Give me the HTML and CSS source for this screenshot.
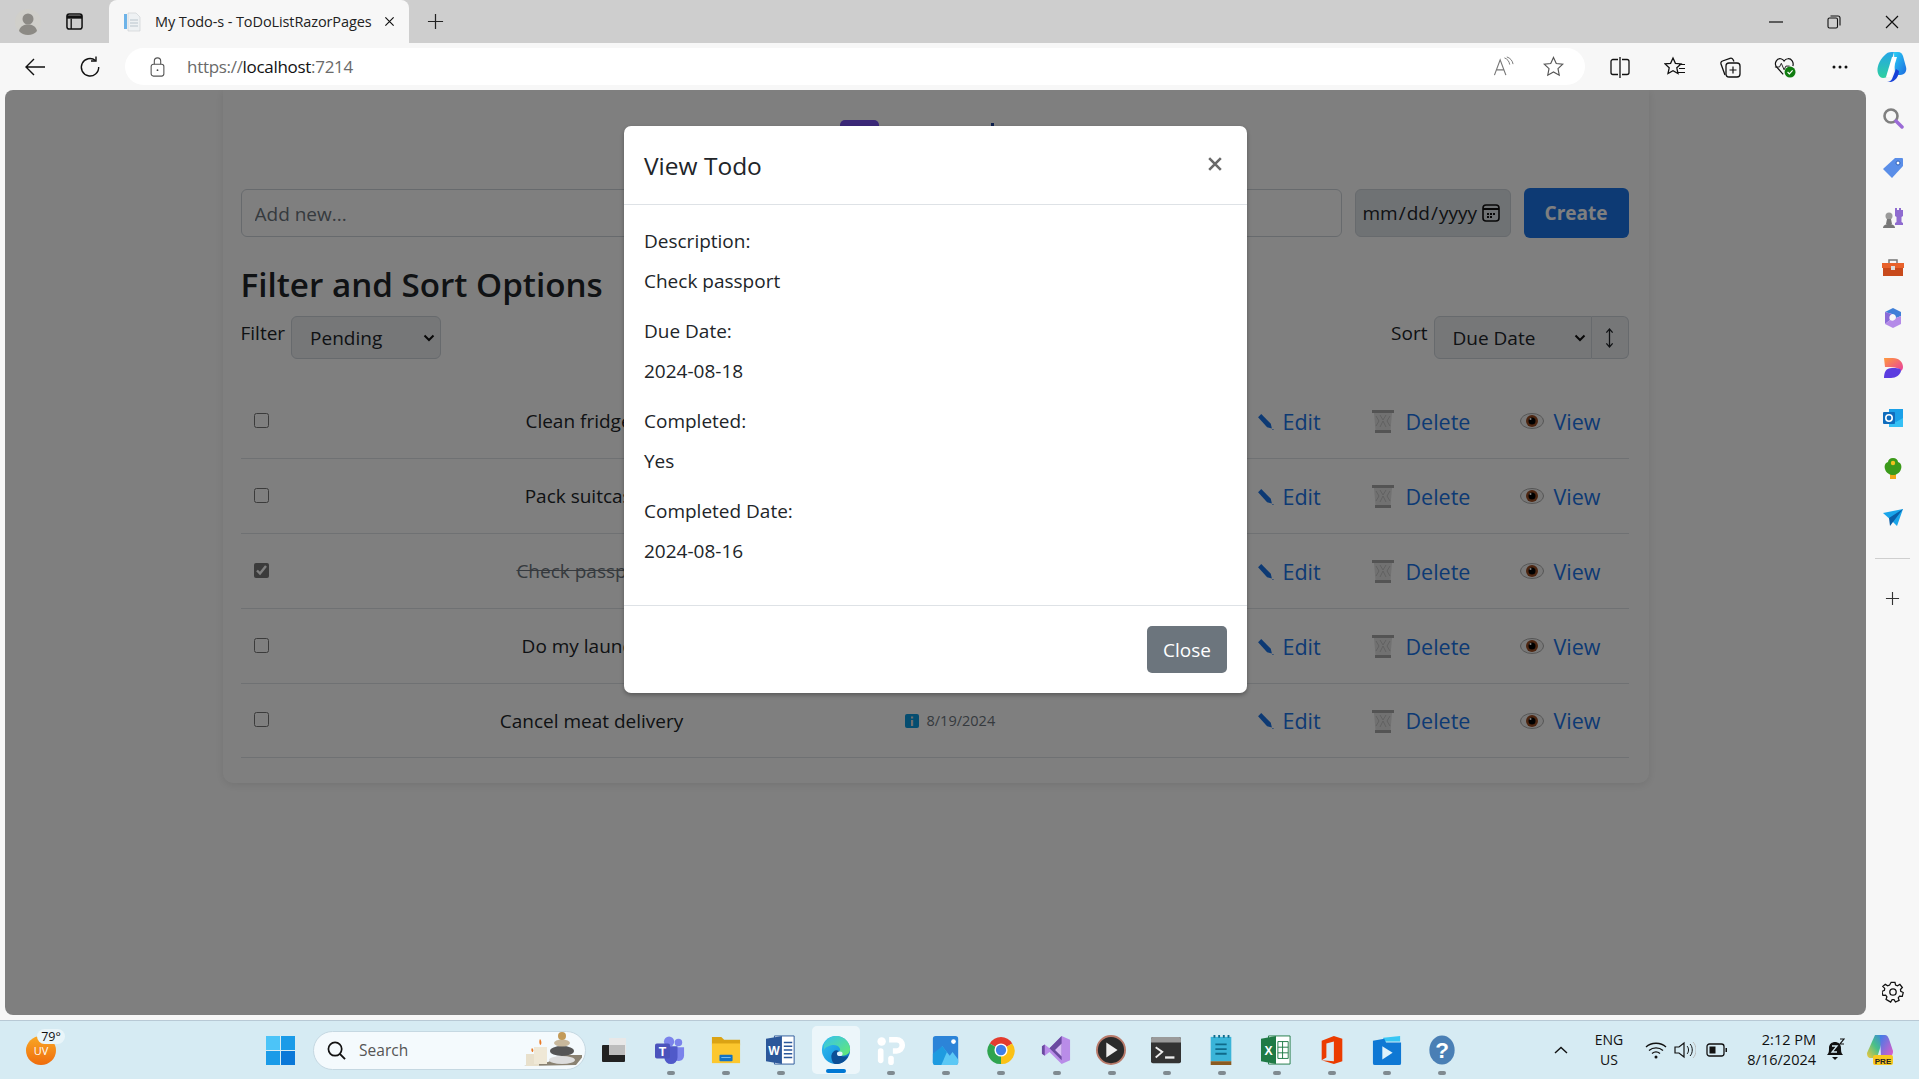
FILE: index.html
```html
<!DOCTYPE html>
<html>
<head>
	<meta charset="utf-8" />
	<title>My Todo-s - ToDoListRazorPages</title>
	<link rel="stylesheet" href="styles.css">
</head>

<body>

<!-- icons used in every todo row -->
<svg class="icon-defs">
	<symbol id="sym-edit" viewBox="0 0 16 16"><path d="M1 4l3-3 9 9 1 4.500-4.500-1z" fill="#1a74e8"/><path d="M15.500 15.500h-1" stroke="#1a74e8"/></symbol>
	<symbol id="sym-trash" viewBox="0 0 22 24"><path d="M0 1h22v3H0z" fill="#a8a8a8"/><path d="M2 4h18l-1.500 18h-15z" fill="#e2e2e2"/><path d="M4 7l3 5-3 5M8 6l3 5 3-5M18 7l-3 5 3 5M8 18l3-6 3 6" fill="none" stroke="#c4c4c4"/><path d="M3 21h16v3H3z" fill="#a8a8a8"/></symbol>
	<symbol id="sym-eye" viewBox="0 0 24 16"><ellipse cx="12" cy="8" rx="11.500" ry="7.500" fill="#f2f2f2" stroke="#aaa"/><circle cx="12" cy="8" r="6" fill="#9b4c22"/><circle cx="12" cy="8" r="3.500" fill="#000"/><circle cx="10.500" cy="6" r="1" fill="#fff"/></symbol>
</svg>

<!-- browser tabs -->
<div class="tabstrip">
	<svg class="profile" viewBox="0 0 26 26"><circle cx="13" cy="13" r="13" fill="#d0cfca"/><circle cx="13" cy="10" r="5.500" fill="#8c8a85"/><path d="M4 22c1-5 5-6.500 9-6.500s8 1.500 9 6.500c-2 2.500-5.500 4-9 4s-7-1.500-9-4z" fill="#8c8a85"/></svg>
	<svg class="tab-actions" viewBox="0 0 18 18"><rect x="1" y="1" width="16" height="16" rx="2.500" fill="none" stroke="#111" stroke-width="1.600"/><path d="M1 2.500h16v3.500H1z" fill="#111"/><path d="M5.500 6v11" stroke="#111" stroke-width="1.400"/></svg>
	<div class="tab">
		<svg class="favicon" viewBox="0 0 20 20"><rect x="1" y="2" width="3" height="15" fill="#6db3e8"/><path d="M5 1h8l4 4v14H5z" fill="#eef1f3" stroke="#c9ced2" stroke-width=".6"/><path d="M7 8h8M7 11h8M7 14h8" stroke="#b9c4cc"/></svg>
		<span class="tab-title">My Todo-s - ToDoListRazorPages</span>
		<svg class="tab-close" viewBox="0 0 12 12"><path d="M1.500 1.500l9 9M10.500 1.500l-9 9" stroke="#111" stroke-width="1.300"/></svg>
	</div>
	<svg class="new-tab" viewBox="0 0 18 18"><path d="M9 1v16M1 9h16" stroke="#222" stroke-width="1.300"/></svg>
	<div class="window-btns">
		<svg viewBox="0 0 14 14"><path d="M0 7h14" stroke="#111" stroke-width="1.200"/></svg>
		<svg viewBox="0 0 14 14"><rect x="1" y="3" width="9.500" height="10" rx="1.500" fill="none" stroke="#111" stroke-width="1.100"/><path d="M3.500 1h7.500a2 2 0 0 1 2 2v7.500" fill="none" stroke="#111" stroke-width="1.100"/></svg>
		<svg viewBox="0 0 14 14"><path d="M1 1l12 12M13 1L1 13" stroke="#111" stroke-width="1.200"/></svg>
	</div>
</div>

<!-- address bar row -->
<div class="toolbar">
	<svg class="tool tool-back" viewBox="0 0 22 22"><path d="M21 11H2M10 3l-8 8 8 8" fill="none" stroke="#111" stroke-width="1.400"/></svg>
	<svg class="tool tool-reload" viewBox="0 0 22 22"><path d="M16.500 4.500A8.700 8.700 0 1 0 19.700 11" fill="none" stroke="#111" stroke-width="1.400"/><path d="M17 .5v4.500h-5" fill="none" stroke="#111" stroke-width="1.400"/></svg>
	<div class="addressbar">
		<svg class="lock" viewBox="0 0 16 22"><rect x="1" y="8" width="14" height="13" rx="2.500" fill="none" stroke="#555" stroke-width="1.200"/><path d="M4.500 8V4.500a3.500 3.500 0 0 1 7 0V8" fill="none" stroke="#555" stroke-width="1.200"/><circle cx="8" cy="14.500" r="1" fill="#444"/></svg>
		<span class="url"><span class="url-dim">https://</span>localhost<span class="url-dim">:7214</span></span>
		<svg class="addr-icon addr-read" viewBox="0 0 22 22"><path d="M1.500 20L7.500 4l6 16M3.800 14.500h7.500" fill="none" stroke="#777" stroke-width="1.200"/><path d="M12 2c3 1 5 3.500 5.500 7M14.500 1c3.500 1 6 4 6.500 7.500" fill="none" stroke="#777"/></svg>
		<svg class="addr-icon addr-star" viewBox="0 0 22 22"><path d="M11 1.500l2.900 6.300 6.800.8-5 4.700 1.300 6.800-6-3.400-6 3.400 1.300-6.800-5-4.700 6.800-.8z" fill="none" stroke="#555" stroke-width="1.200"/></svg>
	</div>
	<svg class="tool tool-split" viewBox="0 0 22 22"><path d="M9 3.500H4a2 2 0 0 0-2 2v11a2 2 0 0 0 2 2h5M13 3.500h5a2 2 0 0 1 2 2v11a2 2 0 0 1-2 2h-5M11 1v21" fill="none" stroke="#111" stroke-width="1.300"/></svg>
	<svg class="tool tool-favs" viewBox="0 0 22 22"><path d="M9 2l2.400 5.300 5.600.6-4.200 3.900 1.200 5.700L9 14.700l-5 2.800 1.200-5.700L1 7.900l5.600-.6z" fill="none" stroke="#111" stroke-width="1.300"/><path d="M15 8.500h6M15 12.500h6M14 16.500h7" stroke="#111" stroke-width="1.200"/></svg>
	<svg class="tool tool-coll" viewBox="0 0 22 22"><rect x="7" y="7" width="14" height="14" rx="3" fill="none" stroke="#111" stroke-width="1.300"/><path d="M14 10.500v7M10.500 14h7" stroke="#111" stroke-width="1.200"/><path d="M6 19L2 8a2.500 2.500 0 0 1 1.500-3L11 2.300a2.500 2.500 0 0 1 3 1.200l1 2" fill="none" stroke="#111" stroke-width="1.300"/></svg>
	<svg class="tool tool-health" viewBox="0 0 24 24"><path d="M10 20L2.500 11.500C0 8 3 2 7.500 3c1.500.3 3 1.500 3.500 2.500C12 4 13.500 3 15 3c4-.5 7 4 5.500 8" fill="none" stroke="#111" stroke-width="1.300"/><path d="M1 12h5l2-4 3 7 2-4h4" fill="none" stroke="#111"/><circle cx="17.500" cy="17.500" r="6" fill="#107c10"/><path d="M14.800 17.500l2 2 3.500-3.800" fill="none" stroke="#fff" stroke-width="1.300"/></svg>
	<svg class="tool tool-dots" viewBox="0 0 16 4"><circle cx="2" cy="2" r="1.500" fill="#111"/><circle cx="8" cy="2" r="1.500" fill="#111"/><circle cx="14" cy="2" r="1.500" fill="#111"/></svg>
	<svg class="tool tool-copilot" viewBox="0 0 30 32"><defs><linearGradient id="cpa" x1="0" y1="0" x2="0" y2="1"><stop offset="0" stop-color="#25a5e8"/><stop offset="1" stop-color="#2fd0a0"/></linearGradient><linearGradient id="cpb" x1="0" y1="0" x2="1" y2="1"><stop offset="0" stop-color="#2ad0f5"/><stop offset="1" stop-color="#1c6be0"/></linearGradient></defs><path d="M9 3c2-2 5-2 8-2l-6 22c-1 3-2 4-5 4C3 27 1 24 .5 20 0 14 4 7 9 3z" fill="url(#cpa)"/><path d="M17 1h4c3 0 4 2 5 4l3 11c1 4-1 8-6 8h-5z" fill="url(#cpb)"/><path d="M15 6h5l-6 20h-5z" fill="#fff"/><path d="M10 31c2 0 4-1 5-3l4-10 3 2c0 5-4 11-9 11z" fill="#1741d8"/></svg>
</div>

<div class="workspace">
	<div class="page">
		<div class="card">
			<div class="brand">
				<span class="brand-logo"></span>
				<span class="brand-dot"></span>
			</div>

			<form class="add-form">
				<input type="text" class="add-text" placeholder="Add new..." />
				<input type="date" class="add-date" />
				<button type="button" class="btn-create">Create</button>
			</form>

			<h2 class="options-title">Filter and Sort Options</h2>
			<div class="options">
				<div class="option-group">
					<label class="option-label">Filter</label>
					<select class="option-select select-filter"><option>Pending</option></select>
				</div>
				<div class="option-group">
					<label class="option-label">Sort</label>
					<select class="option-select select-sort"><option>Due Date</option></select>
					<button type="button" class="btn-order"><svg viewBox="0 0 10 22"><path d="M5 1v20M1.500 5L5 1l3.500 4M1.500 17L5 21l3.500-4" fill="none" stroke="#212529" stroke-width="1.400"/></svg></button>
				</div>
			</div>

			<ul class="todos">
				<li class="todo">
					<input type="checkbox" class="todo-check" />
					<span class="todo-name name-clean">Clean fridge</span>
					<span class="todo-date"></span>
					<div class="todo-links">
						<a href="#"><svg class="ico-edit"><use href="#sym-edit"/></svg>Edit</a>
						<a href="#"><svg class="ico-trash"><use href="#sym-trash"/></svg>Delete</a>
						<a href="#"><svg class="ico-eye"><use href="#sym-eye"/></svg>View</a>
					</div>
				</li>
				<li class="todo">
					<input type="checkbox" class="todo-check" />
					<span class="todo-name name-pack">Pack suitcase</span>
					<span class="todo-date"></span>
					<div class="todo-links">
						<a href="#"><svg class="ico-edit"><use href="#sym-edit"/></svg>Edit</a>
						<a href="#"><svg class="ico-trash"><use href="#sym-trash"/></svg>Delete</a>
						<a href="#"><svg class="ico-eye"><use href="#sym-eye"/></svg>View</a>
					</div>
				</li>
				<li class="todo">
					<input type="checkbox" class="todo-check" checked />
					<span class="todo-name todo-done name-check">Check passport</span>
					<span class="todo-date"></span>
					<div class="todo-links">
						<a href="#"><svg class="ico-edit"><use href="#sym-edit"/></svg>Edit</a>
						<a href="#"><svg class="ico-trash"><use href="#sym-trash"/></svg>Delete</a>
						<a href="#"><svg class="ico-eye"><use href="#sym-eye"/></svg>View</a>
					</div>
				</li>
				<li class="todo">
					<input type="checkbox" class="todo-check" />
					<span class="todo-name name-laundry">Do my laundry</span>
					<span class="todo-date"></span>
					<div class="todo-links">
						<a href="#"><svg class="ico-edit"><use href="#sym-edit"/></svg>Edit</a>
						<a href="#"><svg class="ico-trash"><use href="#sym-trash"/></svg>Delete</a>
						<a href="#"><svg class="ico-eye"><use href="#sym-eye"/></svg>View</a>
					</div>
				</li>
				<li class="todo">
					<input type="checkbox" class="todo-check" />
					<span class="todo-name">Cancel meat delivery</span>
					<span class="todo-date"><svg class="ico-info" viewBox="0 0 14 14"><rect width="14" height="14" rx="2" fill="#0a9ae0"/><path d="M6 6h2.200v6H6zM6 2.500h2.200v2H6z" fill="#ddd"/></svg>8/19/2024</span>
					<div class="todo-links">
						<a href="#"><svg class="ico-edit"><use href="#sym-edit"/></svg>Edit</a>
						<a href="#"><svg class="ico-trash"><use href="#sym-trash"/></svg>Delete</a>
						<a href="#"><svg class="ico-eye"><use href="#sym-eye"/></svg>View</a>
					</div>
				</li>
			</ul>
		</div>

		<!-- view dialog -->
		<div class="backdrop">
			<div class="modal">
				<div class="modal-header">
					<h5 class="modal-title">View Todo</h5>
					<svg class="modal-x" viewBox="0 0 12 12"><path d="M1 1l10 10M11 1L1 11" stroke="#6a6a6a" stroke-width="2.200"/></svg>
				</div>
				<div class="modal-body">
					<label>Description:</label>
					<p>Check passport</p>
					<label>Due Date:</label>
					<p>2024-08-18</p>
					<label>Completed:</label>
					<p>Yes</p>
					<label>Completed Date:</label>
					<p>2024-08-16</p>
				</div>
				<div class="modal-footer">
					<button type="button" class="btn-close">Close</button>
				</div>
			</div>
		</div>
	</div>

	<!-- edge sidebar -->
	<div class="sidebar">
		<div class="side-item"><svg viewBox="0 0 22 22"><circle cx="9" cy="9" r="6.500" fill="none" stroke="#808080" stroke-width="2.600"/><path d="M14 14l6 6" stroke="#9b6bd6" stroke-width="3.500" stroke-linecap="round"/></svg></div>
		<div class="side-item"><svg viewBox="0 0 22 22"><path d="M13 1h7a1 1 0 0 1 1 1v7L10 21 1 12z" fill="#5a8ee8"/><circle cx="16" cy="6" r="2" fill="#fff" stroke="#2f5fb8"/></svg></div>
		<div class="side-item"><svg viewBox="0 0 22 22"><path d="M13 1h2v2h2V1h2v2h2V1v8l-1.500 1v5l1.500 1v2h-8v-2l1.500-1v-5L13 9z" fill="#8f6bd0"/><circle cx="7" cy="9" r="3.500" fill="#9a9a9a"/><path d="M5 12h4l1 5H4zM1 21c0-2 2-4 6-4s6 2 6 4z" fill="#777"/></svg></div>
		<div class="side-item"><svg viewBox="0 0 22 22"><path d="M7 6V3h8v3" fill="none" stroke="#777" stroke-width="1.500"/><path d="M0 6h22v5H0z" fill="#e8622c"/><path d="M1 11h20v8H1z" fill="#c84a1c"/><rect x="9" y="9" width="4" height="4" fill="#ddd"/></svg></div>
		<div class="side-item"><svg viewBox="0 0 22 22"><path d="M11 1l8 4v4l-5 2a4 4 0 0 0-4-4L3 5z" fill="#3f7fd8"/><path d="M3 5l7 2a4 4 0 0 0-2 6L3 17z" fill="#8a6ad8"/><path d="M19 9v8l-8 4-8-4 5-4a4 4 0 0 0 6-2z" fill="#b48ae8"/></svg></div>
		<div class="side-item"><svg viewBox="0 0 22 22"><defs><linearGradient id="dsa" x1="0" y1="0" x2="1" y2="1"><stop offset="0" stop-color="#ff9a3c"/><stop offset="1" stop-color="#e83ea0"/></linearGradient></defs><path d="M2 1h9c6 0 10 4 10 9 0 2-1 3-2 4-2-4-9-4-16-4z" fill="url(#dsa)"/><path d="M2 21c0-6 2-10 8-10 5 0 9 0 9 3-1 4-5 7-10 7z" fill="#5b3ce0"/></svg></div>
		<div class="side-item"><svg viewBox="0 0 22 22"><path d="M7 2h14v18H7z" fill="#1aa0e8"/><path d="M7 11l7 4 7-4v9H7z" fill="#35c0f5"/><rect x="1" y="5" width="12" height="12" rx="1" fill="#0f6cbd"/><circle cx="7" cy="11" r="3.200" fill="none" stroke="#fff" stroke-width="1.600"/></svg></div>
		<div class="side-item"><svg viewBox="0 0 22 22"><path d="M8 17h6v5H8z" fill="#f0a818"/><path d="M11 1c3 0 5 2 5 4 3 1 4 4 3 7-1 4-5 6-8 6s-7-2-8-6c-1-3 0-6 3-7 0-2 2-4 5-4z" fill="#3c9a1a"/><circle cx="11" cy="6" r="2.200" fill="#f0c020"/></svg></div>
		<div class="side-item"><svg viewBox="0 0 22 22"><path d="M1 6l20-4-6 17-5-5z" fill="#1aa5ea"/><path d="M21 2L7 11l1 8 3-4z" fill="#0a5fa8"/></svg></div>
		<div class="side-sep"></div>
		<div class="side-item side-plus"><svg viewBox="0 0 16 16"><path d="M8 1v14M1 8h14" stroke="#333" stroke-width="1.200"/></svg></div>
		<div class="side-item side-gear"><svg viewBox="0 0 22 22"><path d="M9 1h4l.6 2.800 2 .9 2.500-1.500 2.600 3.300-2 2 .3 2 2.600 1.200-1 4-2.900-.2-1.300 1.700.9 2.700-3.800 1.700-1.500-2.400h-2l-1.500 2.400L3.700 18.800l.9-2.700-1.300-1.700-2.900.2-1-4 2.600-1.200.3-2-2-2L2.900 3.200l2.500 1.500 2-.9z" transform="translate(.5 .3) scale(.96)" fill="none" stroke="#111" stroke-width="1.300"/><circle cx="11" cy="11" r="3.200" fill="none" stroke="#111" stroke-width="1.300"/></svg></div>
	</div>
</div>

<!-- windows taskbar -->
<div class="taskbar">
	<div class="weather">
		<span class="weather-uv">UV</span>
		<span class="weather-temp">79°</span>
	</div>
	<div class="task-slot task-start"><svg viewBox="0 0 29 29"><path d="M0 0h14v14H0zM15 0h14v14H15zM0 15h14v14H0zM15 15h14v14H15z" fill="#1a9be8"/><path d="M0 0h14v14H0z" fill="#4cc4f8"/><path d="M15 15h14v14H15z" fill="#0a78d8"/></svg></div>
	<div class="search">
		<svg class="search-ico" viewBox="0 0 20 20"><circle cx="8.500" cy="8.500" r="7" fill="none" stroke="#111" stroke-width="1.800"/><path d="M13.500 13.500l5.500 5.500" stroke="#111" stroke-width="2"/></svg>
		<span class="search-text">Search</span>
		<svg class="search-art" viewBox="0 0 58 36"><path d="M0 34l52-1 8-10-20 0-16 7z" fill="#8a8272"/><rect x="2" y="22" width="13" height="12" fill="#e8e0cc"/><rect x="10" y="15" width="13" height="17" fill="#efe8d6"/><path d="M8 16c-1.500 2 0 4 .5 4s2-2-.5-4zM16 7c-1.500 3 0 6 .5 6s2-3-.5-6z" fill="#e87a28"/><ellipse cx="38" cy="28" rx="13" ry="4" fill="#ddd"/><ellipse cx="38" cy="19" rx="12" ry="5" fill="#555"/><ellipse cx="38" cy="11" rx="8" ry="3.500" fill="#c8b89c"/><circle cx="38" cy="4" r="4" fill="#c29a58"/></svg>
	</div>
	<div class="task-slot task-first"><svg viewBox="0 0 24 24"><rect x="0" y="7" width="23" height="17" rx="1" fill="#222"/><rect x="7" y="0" width="17" height="17" fill="#e8e8e8"/><rect x="7" y="7" width="16" height="10" fill="#bdbdbd"/></svg></div>
	<div class="task-slot task-run"><svg viewBox="0 0 32 32"><circle cx="25" cy="8" r="4" fill="#7b83eb"/><path d="M18 13h13v9a6 6 0 0 1-11 3z" fill="#7b83eb"/><circle cx="15" cy="7" r="5.500" fill="#7b83eb"/><path d="M9 12h15v12a7 7 0 0 1-14 0z" fill="#5059c9"/><rect x="0" y="9" width="16" height="16" rx="2" fill="#4b53bc"/><text x="8" y="22" class="ico-letter">T</text></svg></div>
	<div class="task-slot task-run"><svg viewBox="0 0 32 32"><path d="M1 2h10l3 3h17v6H1z" fill="#dba314"/><path d="M1 9h30v21H1z" fill="#fcc72e"/><rect x="9" y="21" width="14" height="7" rx="1" fill="#1272c4"/><path d="M11 24h10" stroke="#7cc0f0"/></svg></div>
	<div class="task-slot task-run"><svg viewBox="0 0 32 32"><path d="M9 1h21v30H9z" fill="#fff" stroke="#2b579a"/><path d="M19 8h9M19 12h9M19 16h9M19 20h9M19 24h9" stroke="#2b579a" stroke-width="1.500"/><path d="M0 4l17-3v30L0 28z" fill="#2b579a"/><text x="8.500" y="21" class="ico-letter">W</text></svg></div>
	<div class="task-slot task-edge">
		<svg viewBox="0 0 32 32"><defs><linearGradient id="ega" x1="0" y1="0" x2="1" y2="1"><stop offset="0" stop-color="#35c1f1"/><stop offset=".6" stop-color="#1b9de2"/><stop offset="1" stop-color="#0c59a4"/></linearGradient><linearGradient id="egb" x1="0" y1="0" x2="1" y2="1"><stop offset="0" stop-color="#35c1f1"/><stop offset="1" stop-color="#66eb6e"/></linearGradient></defs><circle cx="16" cy="16" r="15" fill="url(#ega)"/><path d="M3 10C6 3 12 1 16 1c8 0 15 6 15 14 0 5-4 7-8 7-3 0-5-1-5-3 2-1 3-3 2-5-2-4-8-4-12-2-3 1-5 3-5 5z" fill="url(#egb)"/><path d="M11 22c1-5 5-7 8-5-1 3 2 6 6 6 2 0 3 0 4-1-2 5-7 9-13 9-3 0-5-4-5-9z" fill="#0c4f96"/><ellipse cx="20" cy="20" rx="3" ry="2.500" fill="#dff2fb"/></svg>
	</div>
	<div class="task-slot task-run"><svg viewBox="0 0 32 32"><circle cx="6" cy="7" r="4.500" fill="#fff"/><path d="M14 2h8a9 9 0 0 1 0 18h-4v-6h4a3 3 0 0 0 0-6h-8z" fill="#fff"/><rect x="2" y="14" width="6" height="16" rx="3" fill="#fff"/><rect x="13" y="22" width="6" height="10" rx="3" fill="#fff"/></svg></div>
	<div class="task-slot task-run"><svg viewBox="0 0 32 32"><rect x="2" y="1" width="27" height="31" rx="3" fill="#2c84d8"/><path d="M2 26l10-14 8 10 3-4 6 8v3a3 3 0 0 1-3 3H5a3 3 0 0 1-3-3z" fill="#5cc8f5"/><path d="M2 20l10-8 5 6-6 14H5a3 3 0 0 1-3-3z" fill="#1e9be0"/><circle cx="24" cy="7" r="2.500" fill="#fff"/></svg></div>
	<div class="task-slot task-run"><svg viewBox="0 0 32 32"><path d="M16 16L4 9a14 14 0 0 1 24 0z" fill="#e33b2e"/><path d="M16 16l12-7a14 14 0 0 1-12 22z" fill="#fbc116"/><path d="M16 16v15A14 14 0 0 1 4 9z" fill="#2fa44f"/><circle cx="16" cy="16" r="7" fill="#fff"/><circle cx="16" cy="16" r="5.500" fill="#3f7fe8"/></svg></div>
	<div class="task-slot task-run"><svg viewBox="0 0 32 32"><path d="M22 1l9 4v22l-9 4-13-13-5 4-3-2V12l3-2 5 4z" fill="#b98ce8"/><path d="M22 1L9 14l-5-4-3 2v8l3 2V10l5 4 13 13z" fill="#6a4aa0"/><path d="M22 9v14l-7-7z" fill="#d8bdf5"/></svg></div>
	<div class="task-slot task-run"><svg viewBox="0 0 32 32"><circle cx="16" cy="16" r="15" fill="#2a2a2a" stroke="#b97a6a" stroke-width="2"/><path d="M11 8l12 8-12 8z" fill="#eee"/></svg></div>
	<div class="task-slot task-run"><svg viewBox="0 0 32 28"><rect y="0" width="32" height="28" rx="2" fill="#333"/><path d="M0 2a2 2 0 0 1 2-2h28a2 2 0 0 1 2 2v4H0z" fill="#9a9a9a"/><path d="M5 11l7 5-7 6" fill="none" stroke="#eee" stroke-width="2"/><path d="M15 22h10" stroke="#eee" stroke-width="2.500"/></svg></div>
	<div class="task-slot task-run"><svg viewBox="0 0 24 32"><path d="M1 2h22v26H1z" fill="#3ab4d8"/><path d="M1 28h22v4H1z" fill="#8a5a20"/><path d="M6 10h12M6 15h12M6 20h12" stroke="#0f6a8a" stroke-width="2"/><path d="M5 0v3M10 0v3M15 0v3M20 0v3" stroke="#0f6a8a" stroke-width="2"/></svg></div>
	<div class="task-slot task-run"><svg viewBox="0 0 32 32"><path d="M8 1h23v30H8z" fill="#fff" stroke="#1f7a45"/><path d="M18 7h11v18H18z" fill="none" stroke="#1f7a45"/><path d="M18 13h11M18 19h11M23 7v18" stroke="#1f7a45"/><path d="M0 4l16-3v30L0 28z" fill="#1f7a45"/><text x="8" y="21" class="ico-letter">X</text></svg></div>
	<div class="task-slot task-run"><svg viewBox="0 0 26 32"><path d="M2 6L15 1l9 3v24l-9 3-13-4 13 1V7L7 9v15l-5 3z" fill="#eb3c00"/></svg></div>
	<div class="task-slot task-run"><svg viewBox="0 0 32 32"><path d="M12 3l18-2v6H12z" fill="#37c6f4"/><path d="M1 6l12-2 2 4h16v22a2 2 0 0 1-2 2H3a2 2 0 0 1-2-2z" fill="#0f78d4"/><path d="M11 12l11 7-11 7z" fill="#dff2fb"/></svg></div>
	<div class="task-slot task-run"><svg viewBox="0 0 28 32"><ellipse cx="14" cy="16" rx="13.500" ry="15.500" fill="#4a7fb5"/><text x="14" y="25" class="ico-help">?</text></svg></div>

	<div class="tray">
		<svg class="tray-chevron" viewBox="0 0 14 8"><path d="M1 7l6-5.500L13 7" fill="none" stroke="#111" stroke-width="1.400"/></svg>
		<div class="tray-lang">ENG<br>US</div>
		<svg class="tray-ico tray-wifi" viewBox="0 0 22 18"><path d="M1 6c5-5 15-5 20 0M4 9.500c4-3.500 10-3.500 14 0M7 12.500c2.500-2 5.500-2 8 0" fill="none" stroke="#111" stroke-width="1.300"/><circle cx="11" cy="16" r="1.500" fill="#111"/></svg>
		<svg class="tray-ico tray-sound" viewBox="0 0 22 18"><path d="M1 6h4l5-4v14l-5-4H1z" fill="none" stroke="#111" stroke-width="1.200"/><path d="M13 5c2 2 2 6 0 8M16 3c3 3 3 9 0 12" fill="none" stroke="#111"/><path d="M19 1c4 4 4 12 0 16" fill="none" stroke="#bbb"/></svg>
		<svg class="tray-ico tray-batt" viewBox="0 0 22 14"><rect x="1" y="1" width="17" height="12" rx="2.500" fill="none" stroke="#111" stroke-width="1.300"/><rect x="3.500" y="3.500" width="6" height="7" fill="#111"/><path d="M19.500 5h1.500v4h-1.500z" fill="#111"/></svg>
		<div class="tray-clock">2:12 PM<br>8/16/2024</div>
		<svg class="tray-bell" viewBox="0 0 20 24"><path d="M2 17c2-2 2-4 2-7 0-4 3-6 6-6s6 2 6 6c0 3 0 5 2 7z" fill="#111"/><path d="M7 19h6l-3 3z" fill="#111"/><path d="M7 8h5l-5 6h5" fill="none" stroke="#d6ebf3" stroke-width="1.300"/><path d="M15 1h4l-4 5h4" fill="none" stroke="#111" stroke-width="1.200"/></svg>
		<svg class="tray-copilot" viewBox="0 0 28 32"><defs><linearGradient id="tca" x1="0" y1="1" x2="1" y2="0"><stop offset="0" stop-color="#f5c838"/><stop offset=".5" stop-color="#48c088"/><stop offset="1" stop-color="#3a80e8"/></linearGradient><linearGradient id="tcb" x1="0" y1="0" x2="1" y2="1"><stop offset="0" stop-color="#3a7ee8"/><stop offset="1" stop-color="#e85ac8"/></linearGradient></defs><path d="M9 1h9l-7 23H5c-3 0-4-2-4-5z" fill="url(#tca)"/><path d="M14 1h5c2 0 3 2 4 4l4 12c0 4-2 6-5 6h-7z" fill="url(#tcb)"/><rect x="7" y="21" width="20" height="10" rx="2" fill="#f8c820"/><text x="17" y="29.500" class="ico-pre">PRE</text></svg>
	</div>
</div>

</body>
</html>
```

FILE: styles.css
```css
* { box-sizing: border-box; }
html, body { margin: 0; padding: 0; }
body { width: 1919px; height: 1079px; overflow: hidden; display: flex; flex-direction: column; background: #f7f7f7; font-family: "Open Sans", "Liberation Sans", sans-serif; color: #212529; }
svg { display: block; flex: none; }
.icon-defs { width: 0; height: 0; position: absolute; }

/* tab strip */
.tabstrip { height: 43px; background: #cecece; display: flex; align-items: center; flex: none; }
.profile { width: 26px; height: 26px; margin-left: 15px; }
.tab-actions { width: 17px; height: 17px; margin-left: 25px; }
.tab { width: 300px; height: 43px; margin-left: 26px; padding: 0 14px 0 14px; background: #f7f7f7; border-radius: 8px 8px 0 0; display: flex; align-items: center; }
.favicon { width: 20px; height: 20px; }
.tab-title { width: 232px; margin-left: 12px; font-size: 14.500px; letter-spacing: -.1px; color: #222; white-space: nowrap; overflow: hidden; }
.tab-close { width: 11px; height: 11px; margin-left: 0; }
.new-tab { width: 17px; height: 17px; margin-left: 18px; }
.window-btns { margin-left: auto; display: flex; align-items: center; gap: 44px; padding-right: 20px; }
.window-btns svg { width: 14px; height: 14px; }

/* toolbar */
.toolbar { height: 47px; flex: none; display: flex; align-items: center; background: #f7f7f7; }
.tool { width: 22px; height: 22px; }
.tool-back { margin-left: 24px; }
.tool-reload { margin-left: 33px; }
.addressbar { width: 1460px; height: 37px; margin-left: 24px; background: #fff; border-radius: 19px; display: flex; align-items: center; }
.lock { width: 15px; height: 20px; margin-left: 25px; }
.url { margin-left: 22px; font-size: 17px; letter-spacing: -.3px; color: #111; }
.url-dim { color: #6a6a6a; }
.addr-icon { width: 21px; height: 21px; }
.addr-read { margin-left: auto; }
.addr-star { margin-left: 29px; margin-right: 21px; }
.tool-split { margin-left: 24px; }
.tool-favs { margin-left: 33px; }
.tool-coll { margin-left: 33px; }
.tool-health { margin-left: 33px; }
.tool-dots { width: 16px; height: 4px; margin-left: 36px; }
.tool-copilot { width: 30px; height: 32px; margin-left: 29px; }

/* page and sidebar */
.workspace { height: 930px; flex: none; display: flex; padding: 0 0 5px 5px; }
.page { position: relative; width: 1861px; height: 925px; border-radius: 8px; overflow: hidden; background: #fff; }
.sidebar { width: 53px; padding-top: 3px; display: flex; flex-direction: column; align-items: center; }
.side-item { height: 50px; flex: none; display: flex; align-items: center; justify-content: center; }
.side-item svg { width: 22px; height: 22px; }
.side-sep { width: 35px; height: 1px; margin-top: 15px; background: #cfcfcf; flex: none; }
.side-plus { margin-top: 14px; }
.side-plus svg { width: 15px; height: 15px; }
.side-gear { margin-top: auto; margin-bottom: -2px; }

/* card */
.card { width: 1426px; margin: 0 auto; padding: 0 20px 25px 18px; border-radius: 0 0 10px 10px; background: #fff; box-shadow: 0 2px 10px rgba(0,0,0,.1); }
.brand { height: 98px; padding: 30px 0 0 599px; display: flex; align-items: flex-start; }
.brand-logo { width: 39px; height: 39px; border-radius: 5px; background: #7650f0; }
.brand-dot { width: 3px; height: 10px; margin: 3px 0 0 112px; background: #1a3f9a; }

.add-form { display: flex; align-items: center; gap: 13px; height: 50px; }
.add-text { width: 1101px; height: 48px; padding: 2px 13px 0; border: 1px solid #ced4da; border-radius: 6px; font: 19px "Open Sans", sans-serif; color: #212529; outline: none; }
.add-text::placeholder { color: #6c757d; opacity: 1; }
.add-date { width: 156px; height: 48px; padding: 0 9px 0 6px; border: 1px solid #ced4da; border-radius: 6px; background: #dfe4e9; font: 19px "Open Sans", sans-serif; color: #212529; }
.add-date::-webkit-calendar-picker-indicator { width: 20px; height: 20px; margin: 0; padding: 0; background: url("data:image/svg+xml,%3Csvg xmlns='http://www.w3.org/2000/svg' viewBox='0 0 18 18'%3E%3Crect x='1' y='1' width='16' height='16' rx='3' fill='none' stroke='%23111' stroke-width='1.600'/%3E%3Cpath d='M1 5h16' stroke='%23111' stroke-width='2'/%3E%3Cpath d='M5 9h2v2H5zM8 9h2v2H8zM11 9h2v2h-2zM5 12h2v2H5zM8 12h2v2H8z' fill='%23111'/%3E%3C/svg%3E") center / 18px 18px no-repeat; }
.btn-create { width: 105px; height: 50px; border: 0; border-radius: 6px; background: #1a74e8; color: #fff; font: 700 19px "Open Sans", sans-serif; }

.options-title { margin: 23px 0 0; font-size: 33.200px; font-weight: 600; line-height: 48px; color: #212529; white-space: nowrap; }
.options { margin-top: 7px; display: flex; justify-content: space-between; }
.option-group { display: flex; align-items: flex-start; }
.option-label { margin: 2px 6px 0 0; font-size: 19px; line-height: 30px; }
.option-select { height: 43px; padding: 0 8px 0 18px; border: 1px solid #ced4da; border-radius: 6px; background: #eceef1 url("data:image/svg+xml,%3Csvg xmlns='http://www.w3.org/2000/svg' viewBox='0 0 12 8'%3E%3Cpath d='M1.500 1.500L6 6l4.500-4.500' fill='none' stroke='%23111' stroke-width='2'/%3E%3C/svg%3E") right 5px center / 12px 8px no-repeat; font: 19px "Open Sans", sans-serif; color: #212529; appearance: none; }
.select-filter { width: 150px; }
.select-sort { width: 158px; border-radius: 6px 0 0 6px; }
.btn-order { width: 37px; height: 43px; padding: 0; border: 1px solid #ced4da; border-left: 0; border-radius: 0 6px 6px 0; background: #eceef1; display: flex; align-items: center; justify-content: center; }
.btn-order svg { width: 9px; height: 20px; }

/* todo rows */
.todos { list-style: none; margin: 25px 0 0; padding: 0; }
.todo { height: 75px; border-bottom: 1px solid #dee2e6; display: grid; grid-template-columns: 59px 584px 373px 1fr; align-items: center; }
.todo:last-child { height: 74px; }
.todo-check { width: 15px; height: 15px; margin: 0 0 2px 13px; accent-color: #777; }
.todo-name { font-size: 19px; text-align: center; white-space: nowrap; }
.todo-done { color: #6c757d; text-decoration: line-through; }
.name-clean { padding-right: 26px; }
.name-pack { padding-right: 16px; }
.name-check { padding-right: 14px; }
.name-laundry { padding-right: 10px; }
.todo-date { display: flex; align-items: center; padding-left: 21px; font-size: 14.500px; color: #6c757d; }
.ico-info { width: 14px; height: 14px; margin-right: 8px; }
.todo-links { display: grid; grid-template-columns: 115px 148px auto; }
.todo-links a { display: flex; align-items: center; color: #1a74e8; text-decoration: none; font-size: 21.500px; }
.ico-edit { width: 17px; height: 17px; margin-right: 9px; }
.ico-trash { width: 22px; height: 24px; margin-right: 12px; }
.ico-eye { width: 24px; height: 16px; margin-right: 10px; }

/* dialog over the page */
.backdrop { position: absolute; left: 0; top: 0; right: 0; bottom: 0; padding-top: 36px; background: rgba(0,0,0,.5); display: flex; justify-content: center; align-items: flex-start; }
.modal { width: 623px; height: 567px; background: #fff; border-radius: 7px; box-shadow: 0 2px 4px rgba(0,0,0,.3); font-size: 19px; }
.modal-header { height: 79px; padding: 0 20px; border-bottom: 1px solid #dee2e6; display: flex; align-items: center; justify-content: space-between; }
.modal-title { margin: 0; font-size: 24.500px; font-weight: 500; }
.modal-x { width: 14px; height: 14px; margin: 0 5px 2px 0; }
.modal-body { height: 401px; padding: 21px 20px 0; border-bottom: 1px solid #dee2e6; }
.modal-body label { display: block; height: 30px; line-height: 30px; margin-bottom: 10px; }
.modal-body p { height: 30px; line-height: 30px; margin: 0 0 20px; }
.modal-footer { height: 87px; padding: 20px 20px 0 0; display: flex; justify-content: flex-end; }
.btn-close { width: 80px; height: 47px; border: 0; border-radius: 5px; background: #6c757d; color: #fff; font: 19px "Open Sans", sans-serif; }

/* taskbar */
.taskbar { height: 59px; flex: none; padding-left: 26px; border-top: 1px solid #b8c9d5; background: #d6ebf3; display: flex; align-items: center; position: relative; }
.weather { position: relative; width: 30px; height: 29px; margin-right: 197px; border-radius: 50%; background: linear-gradient(#f9a825, #ef6c0c); margin-top: 1px; }
.weather-uv { display: block; padding-top: 8px; text-align: center; font-size: 11px; color: #fff; line-height: 14px; }
.weather-temp { position: absolute; left: 11px; top: -7px; width: 28px; height: 15px; border-radius: 8px; background: #e9f5f9; text-align: center; font-size: 12.500px; line-height: 15px; color: #111; }
.task-slot { position: relative; width: 55.100px; height: 48px; flex: none; display: flex; align-items: center; justify-content: center; }
.task-slot svg { width: 30px; height: 30px; }
.task-start svg { width: 29px; height: 29px; }
.task-first { width: 56.800px; }
.task-first svg { width: 24px; height: 24px; margin-right: 1px; }
.task-run::after { content: ""; position: absolute; left: 24px; bottom: -1px; width: 8px; height: 4px; border-radius: 2px; background: #7f8a90; }
.task-edge { width: 48px; margin: 0 3.550px; border-radius: 5px; background: rgba(255,255,255,.55); }
.task-edge::after { content: ""; position: absolute; left: 14px; bottom: 1px; width: 20px; height: 4px; border-radius: 2px; background: #0078d4; }
.ico-letter { font: 700 13px "Liberation Sans", sans-serif; fill: #fff; text-anchor: middle; }
.ico-help { font: 700 24px "Liberation Sans", sans-serif; fill: #fff; text-anchor: middle; }
.ico-pre { font: 700 8px "Liberation Sans", sans-serif; fill: #222; text-anchor: middle; }

.search { width: 273px; height: 39px; margin-left: 5px; border: 1px solid #c5d8e2; border-radius: 20px; background: #f4fafd; display: flex; align-items: center; }
.search-ico { width: 19px; height: 19px; margin-left: 13px; }
.search-text { margin-left: 13px; font-size: 15.500px; color: #555; }
.search-art { width: 58px; height: 36px; margin-left: auto; margin-right: 3px; }

.tray { margin-left: auto; padding-right: 25px; display: flex; align-items: center; }
.tray-chevron { width: 14px; height: 8px; margin-right: 17px; }
.tray-lang { width: 48px; font-size: 14px; line-height: 20px; text-align: center; color: #111; }
.tray-ico { width: 22px; height: 18px; }
.tray-wifi { margin-left: 12px; }
.tray-sound { margin-left: 7px; }
.tray-batt { margin-left: 10px; height: 14px; }
.tray-clock { width: 88px; font-size: 14.500px; line-height: 20px; text-align: right; color: #111; white-space: nowrap; }
.tray-bell { width: 20px; height: 24px; margin-left: 9px; }
.tray-copilot { width: 28px; height: 32px; margin-left: 21px; }
```
